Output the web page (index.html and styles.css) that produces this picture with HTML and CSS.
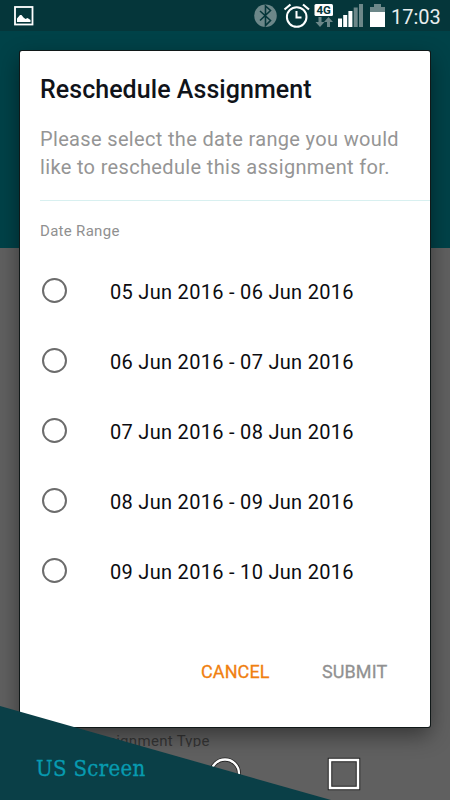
FILE: index.html
```html
<!DOCTYPE html>
<html lang="en">
<head>
<meta charset="utf-8">
<title>Reschedule Assignment</title>
<link rel="stylesheet" href="styles.css">
</head>
<body>
<div class="phone">
  <header class="status">
    <svg class="picture" width="20" height="20" viewBox="0 0 20 20"><rect x="1" y="1" width="17.5" height="17.5" fill="none" stroke="#fff" stroke-width="1.8"/><path d="M3 16v-3.500l3-3.500 1.500 0 2 2.500 2 1.500 2-1 3 2v2z" fill="#fff"/></svg>
    <svg class="system" width="140" height="31" viewBox="0 0 140 31">
      <circle cx="12.500" cy="15.700" r="11.300" fill="#6c8789"/>
      <path d="M7 11l10.500 9.500-5 5V6l5 4.500L7 20.500" fill="none" stroke="#05363a" stroke-width="1.600"/>
      <g fill="none" stroke="#fff" stroke-width="2"><circle cx="43.700" cy="17" r="9.800"/><path d="M43.500 11v6.500h5"/><path d="M31.500 9.500l6-5M50 4.500l6 5" stroke-width="2.200"/></g>
      <rect x="61.500" y="4" width="18.500" height="12" rx="1.500" fill="#fff"/>
      <text class="network" x="70.700" y="14" text-anchor="middle">4G</text>
      <path d="M65.500 17h3v5h3L67 27l-4.500-5h3zM74 27h3v-5h3l-4.500-5-4.500 5h3z" fill="#6c8789"/>
      <path d="M85 18.500h4V27h-4zM90.200 15h4v12h-4zM95.400 11h4v16h-4z" fill="#fff"/>
      <path d="M100.700 7.500h4V27h-4zM106 4h4v23h-4z" fill="#6c8789"/>
      <path d="M121 4h7v3h4v5h-15V7h4z" fill="#6c8789"/><path d="M117 12h15v15h-15z" fill="#fff"/>
    </svg>
    <span class="clock">17:03</span>
  </header>
  <div class="toolbar"></div>
  <main class="content"><p class="field">Assignment Type</p></main>

  <section class="dialog">
    <h1>Reschedule Assignment</h1>
    <p class="message">Please select the date range you would<br>like to reschedule this assignment for.</p>
    <hr>
    <p class="label">Date Range</p>
    <ul class="options">
      <li><i class="radio"></i><span>05 Jun 2016 - 06 Jun 2016</span></li>
      <li><i class="radio"></i><span>06 Jun 2016 - 07 Jun 2016</span></li>
      <li><i class="radio"></i><span>07 Jun 2016 - 08 Jun 2016</span></li>
      <li><i class="radio"></i><span>08 Jun 2016 - 09 Jun 2016</span></li>
      <li><i class="radio"></i><span>09 Jun 2016 - 10 Jun 2016</span></li>
    </ul>
    <div class="actions"><span class="cancel">CANCEL</span><span class="submit">SUBMIT</span></div>
  </section>

  <svg class="nav" width="450" height="53" viewBox="0 0 450 53"><g fill="none"><circle cx="225" cy="26.500" r="14" stroke="#222" stroke-width="4"/><circle cx="225" cy="26.500" r="14" stroke="#fff" stroke-width="2.300"/><rect x="330" y="13" width="28" height="28" stroke="#222" stroke-width="4.500"/><rect x="330" y="13" width="28" height="28" stroke="#fff" stroke-width="2.500"/></g></svg>
  <div class="ribbon"><span>US Screen</span></div>
</div>
</body>
</html>
```
FILE: styles.css
```css
* { box-sizing: border-box; margin: 0; padding: 0; }
body { font-family: Roboto, "Liberation Sans", sans-serif; background: #606060; }
.phone { position: relative; width: 450px; height: 800px; overflow: hidden; display: flex; flex-direction: column; }
.status { height: 31px; background: #05363a; display: flex; align-items: center; padding-left: 14px; flex: none; }
.picture { flex: none; }
.system { margin-left: 219px; flex: none; }
.network { font: bold 11.5px Roboto, sans-serif; fill: #05363a; }
.clock { color: #e8eeee; font-size: 20px; margin-left: -2px; padding-top: 2px; white-space: nowrap; }
.toolbar { height: 217px; background: #004248; flex: none; }
.content { height: 499px; background: #606060; display: flex; align-items: flex-end; flex: none; overflow: hidden; }
.field { margin-left: 90px; height: 17px; line-height: 22px; font-size: 15px; letter-spacing: .3px; color: #353535; overflow: hidden; }
.dialog { position: absolute; left: 20px; top: 51px; width: 410px; height: 676px; background: #fff; border-radius: 2px; box-shadow: 0 0 0 1px #101818, 0 8px 22px rgba(0,0,0,.45); }
h1 { margin: 24px 0 0 20px; font-size: 25px; line-height: 30px; letter-spacing: .05px; font-weight: 500; color: #101319; white-space: nowrap; }
.message { margin: 20px 0 0 20px; font-size: 20px; line-height: 28px; letter-spacing: .34px; color: #959595; white-space: nowrap; }
hr { border: 0; height: 1px; background: #d8f0f0; margin: 19px 0 0 20px; }
.label { margin: 20px 0 0 20px; font-size: 15px; line-height: 20px; letter-spacing: .3px; color: #909090; }
.options { list-style: none; margin-top: 14px; }
.options li { height: 70px; display: flex; align-items: center; padding-left: 22px; font-size: 20px; letter-spacing: .3px; color: #0c0c10; white-space: nowrap; }
.options span { padding-top: 3px; }
.radio { width: 25px; height: 25px; border: 2.5px solid #6c6c6c; border-radius: 50%; margin-right: 43px; flex: none; }
.actions { display: flex; margin: 55px 0 0 181px; font-size: 18px; line-height: 24px; letter-spacing: .1px; -webkit-text-stroke: .3px; }
.cancel { width: 121px; color: #f08010; }
.submit { color: #919191; }
.nav { position: absolute; left: 0; top: 747px; }
.ribbon { position: absolute; left: 0; top: 706px; width: 331px; height: 94px; background: #0a3f47; clip-path: polygon(0 0, 100% 100%, 0 100%); padding: 48px 0 0 36px; font: 22px/30px "DejaVu Serif Condensed", "DejaVu Serif", serif; letter-spacing: .3px; -webkit-text-stroke: .3px; color: #079bb0; }
```
